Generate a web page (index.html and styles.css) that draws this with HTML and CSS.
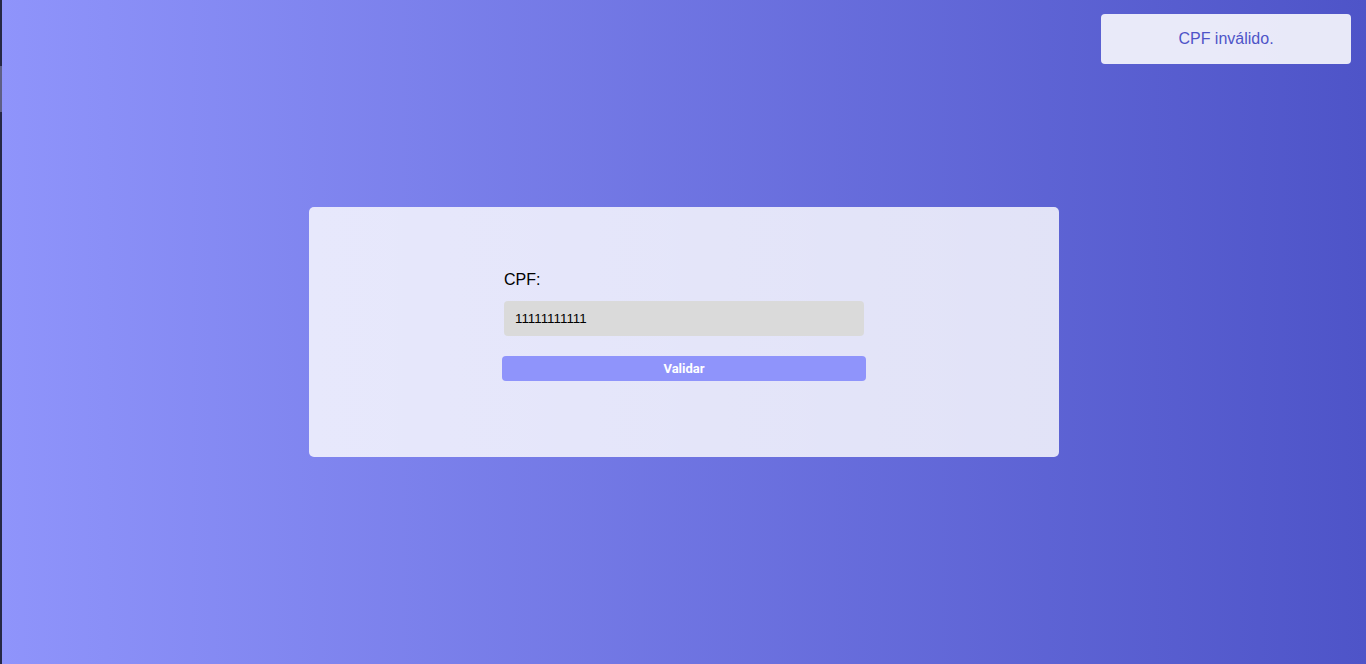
FILE: index.html
```html
<!DOCTYPE html>
<html lang="pt-BR">
<head>
<meta charset="utf-8">
<title>Validar CPF</title>
<link rel="stylesheet" href="styles.css">
</head>
<body>
<div class="edge"><span class="edge-mark"></span></div>
<main class="page">
  <section class="card">
    <form class="form">
      <label class="label" for="cpf">CPF:</label>
      <input class="input" id="cpf" type="text" value="11111111111">
      <button class="btn" type="button">Validar</button>
    </form>
  </section>
</main>
<div class="toast">CPF inválido.</div>
</body>
</html>
```
FILE: styles.css
```css
* { box-sizing: border-box; }
html, body { margin: 0; height: 100%; }
body {
  font-family: "Liberation Sans", Arial, sans-serif;
  background: linear-gradient(to right, #8f94fb, #4e54c8);
  display: flex;
  overflow: hidden;
}
.edge {
  width: 2px;
  height: 100%;
  background: #262845;
  flex: none;
  position: relative;
}
.edge-mark {
  position: absolute;
  left: 0;
  top: 66px;
  width: 2px;
  height: 46px;
  background: #5e5f85;
}
.page {
  flex: 1;
  display: flex;
  align-items: center;
  justify-content: center;
}
.card {
  width: 750px;
  height: 250px;
  border-radius: 5px;
  background: linear-gradient(to right, rgba(255,255,255,0.81), rgba(255,255,255,0.82));
  display: flex;
  justify-content: center;
  padding-top: 64px;
}
.form {
  width: 364px;
  display: flex;
  flex-direction: column;
  align-items: center;
}
.label {
  width: 360px;
  font-size: 16px;
  color: #000;
  line-height: 18px;
  margin-bottom: 12px;
}
.input {
  width: 360px;
  height: 35px;
  border: none;
  border-radius: 4px;
  background: #dadada;
  padding: 0 11px;
  font-family: "Liberation Sans", Arial, sans-serif;
  font-size: 13.333px;
  color: #000;
  outline: none;
}
.btn {
  margin-top: 20px;
  width: 364px;
  height: 25px;
  border: none;
  border-radius: 4px;
  background: #8f94fb;
  color: #fff;
  font-family: Roboto, "Liberation Sans", sans-serif;
  font-weight: 700;
  font-size: 13px;
  padding: 0;
}
.toast {
  position: absolute;
  top: 14px;
  right: 15px;
  width: 250px;
  height: 50px;
  border-radius: 4px;
  background: rgba(255,255,255,0.87);
  color: #4e54c8;
  font-size: 16px;
  display: flex;
  align-items: center;
  justify-content: center;
}
```
